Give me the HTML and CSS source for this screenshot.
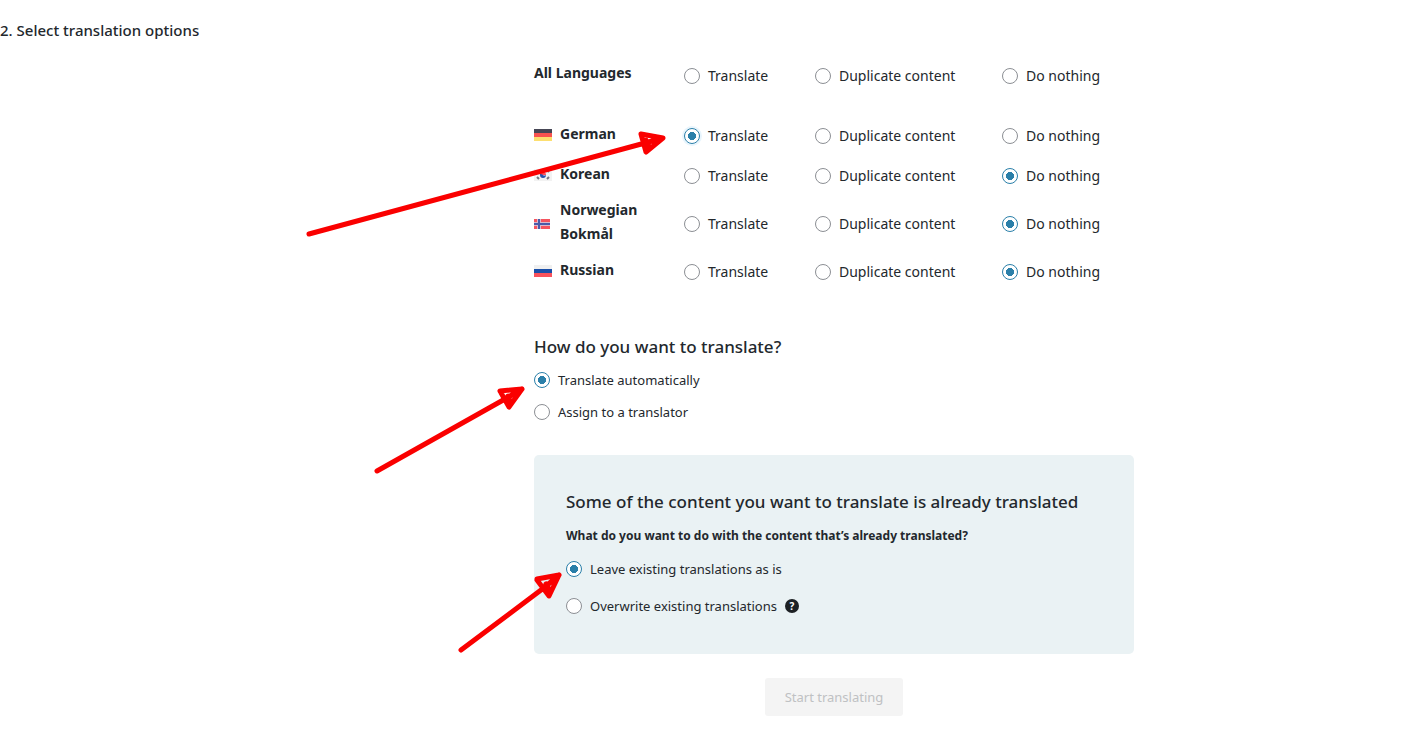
FILE: index.html
```html
<!DOCTYPE html>
<html lang="en">
<head>
<meta charset="utf-8">
<title>Select translation options</title>
<meta name="viewport" content="width=device-width, initial-scale=1">
<link rel="stylesheet" href="styles.css">
</head>
<body>
<main class="step">
  <h2 class="step-title">2. Select translation options</h2>
  <form class="options">
    <table class="languages">
      <tbody>
      <tr class="row-all">
        <th scope="row"><span class="language">All Languages</span></th>
        <td><label class="choice"><input type="radio" name="all">Translate</label></td>
        <td><label class="choice"><input type="radio" name="all">Duplicate content</label></td>
        <td><label class="choice"><input type="radio" name="all">Do nothing</label></td>
      </tr>
      <tr>
        <th scope="row"><span class="language"><svg class="flag" viewBox="0 0 18 12" aria-hidden="true"><path fill="#464655" d="M0 0h18v4H0z"/><path fill="#f8524f" d="M0 4h18v4H0z"/><path fill="#fddf70" d="M0 8h18v4H0z"/></svg>German</span></th>
        <td><label class="choice"><input class="is-focused" type="radio" name="de" checked>Translate</label></td>
        <td><label class="choice"><input type="radio" name="de">Duplicate content</label></td>
        <td><label class="choice"><input type="radio" name="de">Do nothing</label></td>
      </tr>
      <tr>
        <th scope="row"><span class="language"><svg class="flag" viewBox="0 0 18 12" aria-hidden="true"><path fill="#f2f2f2" d="M0 0h18v12H0z"/><path fill="#ff4b55" d="M6 6a3 3 0 0 1 6 0z"/><path fill="#2b50a8" d="M6 5q2 0 3 1t3 0a3 3 0 0 1-6 0z"/><path stroke="#75757f" stroke-width="2" d="M3 3l1-1M14 2l1 1M3 8l2 2M13 10l2-2"/></svg>Korean</span></th>
        <td><label class="choice"><input type="radio" name="ko">Translate</label></td>
        <td><label class="choice"><input type="radio" name="ko">Duplicate content</label></td>
        <td><label class="choice"><input type="radio" name="ko" checked>Do nothing</label></td>
      </tr>
      <tr class="row-tall">
        <th scope="row"><span class="language"><svg class="flag flag-small" viewBox="0 0 16 10" aria-hidden="true"><path fill="#f5545e" d="M0 0h16v10H0z"/><path fill="#d9b9cc" d="M3 0h4v10H3zM0 3h16v4H0z"/><path fill="#4a5ba8" d="M4 0h2v10H4zM0 4h16v2H0z"/></svg>Norwegian Bokmål</span></th>
        <td><label class="choice"><input type="radio" name="nb">Translate</label></td>
        <td><label class="choice"><input type="radio" name="nb">Duplicate content</label></td>
        <td><label class="choice"><input type="radio" name="nb" checked>Do nothing</label></td>
      </tr>
      <tr>
        <th scope="row"><span class="language"><svg class="flag" viewBox="0 0 18 12" aria-hidden="true"><path fill="#f0f0f0" d="M0 0h18v4H0z"/><path fill="#1a4fa8" d="M0 4h18v4H0z"/><path fill="#f8525c" d="M0 8h18v4H0z"/></svg>Russian</span></th>
        <td><label class="choice"><input type="radio" name="ru">Translate</label></td>
        <td><label class="choice"><input type="radio" name="ru">Duplicate content</label></td>
        <td><label class="choice"><input type="radio" name="ru" checked>Do nothing</label></td>
      </tr>
      </tbody>
    </table>

    <fieldset class="method">
      <legend class="heading">How do you want to translate?</legend>
      <label class="choice choice-small"><input type="radio" name="method" checked>Translate automatically</label>
      <label class="choice choice-small"><input type="radio" name="method">Assign to a translator</label>
    </fieldset>

    <section class="notice">
      <h3 class="heading">Some of the content you want to translate is already translated</h3>
      <p class="question">What do you want to do with the content that’s already translated?</p>
      <label class="choice choice-small"><input type="radio" name="existing" checked>Leave existing translations as is</label>
      <div class="with-help">
        <label class="choice choice-small"><input type="radio" name="existing">Overwrite existing translations</label>
        <button class="help" type="button" aria-label="Help">?</button>
      </div>
    </section>

    <button class="submit" type="submit" disabled>Start translating</button>
  </form>

  <svg class="arrows" viewBox="0 0 1404 739" aria-hidden="true">
    <path d="M309 234L645 143L663 138M641 134L663 138L646 152L641 134M646 140l3 6"/>
    <path d="M377 471L505 399L522 389M500 391L522 389L509 407L500 391M508 396l2 5"/>
    <path d="M461 650L545 587L559 575M537 579L559 575L549 596L537 580M546 584l3 5"/>
  </svg>
</main>
</body>
</html>
```

FILE: styles.css
```css
* {
  box-sizing: border-box;
}

body {
  margin: 0;
  background: #fff;
  color: #23282d;
  font-family: "Noto Sans", "Open Sans", sans-serif;
  font-size: 14px;
  line-height: 24px;
}

.step {
  position: relative;
  padding: 18px 0 23px;
}

.step-title {
  margin: 0 0 14px;
  font-size: 15px;
  font-weight: 500;
}

.options {
  display: flex;
  flex-direction: column;
  max-width: 864px;
  margin: 0 auto;
  padding-left: 264px;
}

.languages {
  width: 100%;
  border-collapse: collapse;
  table-layout: fixed;
}

.languages th {
  width: 25%;
  padding: 0 32px 5px 0;
  text-align: left;
  font-size: 14px;
  font-weight: 700;
}

.languages td {
  padding: 0;
}

.languages td:nth-child(2) {
  width: 131px;
}

.languages td:nth-child(3) {
  width: 187px;
}

.languages tr {
  height: 40px;
}

.languages .row-all {
  height: 60px;
  vertical-align: top;
}

.languages .row-all .choice {
  padding-top: 8px;
}

.languages .row-all th {
  padding-top: 5px;
}

.languages .row-tall {
  height: 56px;
}

.language {
  display: flex;
  align-items: center;
  gap: 8px;
}

.flag {
  flex: none;
  width: 18px;
  height: 12px;
  margin-top: 3px;
}

.flag-small {
  width: 16px;
  height: 10px;
  margin-top: 5px;
  margin-right: 2px;
}

.choice {
  display: flex;
  align-items: center;
  gap: 8px;
  font-size: 14px;
  white-space: nowrap;
}

.choice-small {
  font-size: 13px;
}

input[type="radio"] {
  flex: none;
  appearance: none;
  width: 16px;
  height: 16px;
  margin: 0;
  border: 1px solid #8c8f94;
  border-radius: 50%;
  background: #fff;
}

input[type="radio"]:checked {
  border-color: #2a7fa9;
  background: radial-gradient(circle, #2a7fa9 4px, #fff 4px);
}

input.is-focused {
  box-shadow: 0 0 0 2px #e8f5fd;
}

.method {
  display: flex;
  flex-direction: column;
  gap: 8px;
  margin: 43px 0 0;
  padding: 0;
  border: 0;
}

.heading {
  margin: 0;
  padding: 0;
  font-size: 17px;
  font-weight: 500;
}

.method .heading {
  margin-bottom: 9px;
}

.notice {
  margin-top: 31px;
  padding: 35px 32px 36px;
  border-radius: 5px;
  background: #eaf2f4;
}

.question {
  margin: 10px 0 9px;
  font-size: 12px;
  font-weight: 700;
}

.with-help {
  display: flex;
  align-items: center;
  gap: 8px;
  margin-top: 13px;
}

.help {
  width: 14px;
  height: 14px;
  padding: 0;
  border: 0;
  border-radius: 50%;
  background: #1d2124;
  color: #fff;
  font: 700 10px/14px "Noto Sans", sans-serif;
}

.submit {
  align-self: center;
  margin-top: 24px;
  padding: 7px 20px;
  border: 0;
  border-radius: 3px;
  background: #f4f4f4;
  color: #bfc1c3;
  font: 13px/24px "Noto Sans", sans-serif;
}

.arrows {
  position: absolute;
  top: 0;
  left: 50%;
  width: 1404px;
  height: 739px;
  margin-left: -702px;
  fill: none;
  stroke: #fa0000;
  stroke-width: 5;
  stroke-linecap: round;
  stroke-linejoin: round;
  pointer-events: none;
}
```
